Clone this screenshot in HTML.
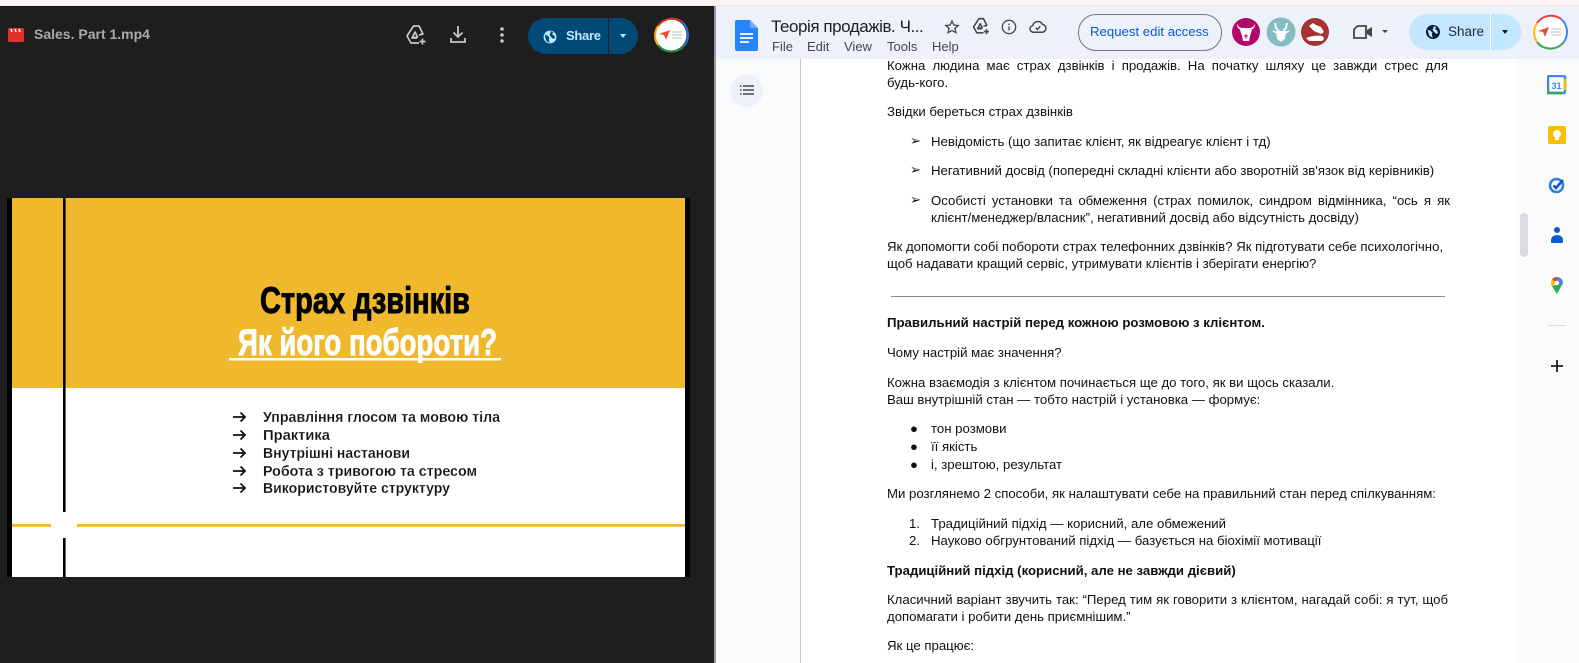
<!DOCTYPE html>
<html><head><meta charset="utf-8">
<style>
html,body{margin:0;padding:0;width:1579px;height:663px;overflow:hidden;background:#fff;font-family:"Liberation Sans",sans-serif}
.a{position:absolute}
#doc span,#doc div.l{position:absolute;white-space:nowrap;font-size:13.2px;line-height:18px;color:#111}
#doc .j{width:561px;left:887px;white-space:normal!important;text-align:justify;text-align-last:justify;height:18px}
#doc .t{left:887px}
#doc .li{left:931px}
#doc .b{font-weight:bold}
.m{position:absolute;top:38px;font-size:13px;line-height:18px;color:#444746}
</style></head><body>
<div class="a" style="left:0;top:0;width:1579px;height:5px;background:#fff5f2;border-bottom:1px solid #f0e4e0"></div>
<div class="a" style="left:0;top:6px;width:714px;height:657px;background:#1e1e1e"></div>
<div class="a" style="left:714px;top:6px;width:2px;height:657px;background:#9a9a9a"></div>

<!-- viewer header -->
<svg class="a" style="left:8px;top:28px" width="16" height="14" viewBox="0 0 16 14"><rect y="0" width="16" height="14" rx="1.5" fill="#e13027"/><path d="M3 1l1 3M7 1l1 3M11 1l1 3" stroke="#fff" stroke-width="1.6"/></svg>
<div class="a" style="left:34px;top:25px;font-size:14px;line-height:18px;font-weight:bold;color:#aaa">Sales. Part 1.mp4</div>
<svg class="a" style="left:404px;top:24px" width="24" height="24" viewBox="0 0 24 24" fill="none" stroke="#c7c7c7" stroke-width="1.700" stroke-linejoin="round"><path d="M15 11L19 10 15 2H9.500L3 12l4 7h8"/><path d="M8 14l3-6 2.500 5zM8 14h5"/><path d="M18.500 14.500v6M15.500 17.500h6"/></svg>
<svg class="a" style="left:446px;top:22px" width="24" height="24" viewBox="0 0 24 24" fill="none" stroke="#c7c7c7" stroke-width="1.800"><path d="M12 4v11M7.500 10.500L12 15l4.500-4.500M5 16v4h14v-4"/></svg>
<svg class="a" style="left:490px;top:23px" width="24" height="24" fill="#c7c7c7"><circle cx="12" cy="6" r="1.800"/><circle cx="12" cy="12" r="1.800"/><circle cx="12" cy="18" r="1.800"/></svg>
<div class="a" style="left:528px;top:18px;width:110px;height:36px;border-radius:18px;background:#004a77"></div>
<div class="a" style="left:608px;top:18px;width:1px;height:36px;background:#1e1e1e"></div>
<svg class="a" style="left:543px;top:30px" width="14" height="14" viewBox="0 0 24 24"><circle cx="12" cy="12" r="11" fill="#c2e7ff"/><path d="M3 8l5 2 3 3-1 4 2 5-6-3-2-6zM13 2l5 2-3 3 4 2 2 5-4 1-4-4-2-3 2-3z" fill="#004a77"/></svg>
<div class="a" style="left:566px;top:27px;font-size:13px;line-height:18px;font-weight:bold;color:#c2e7ff;letter-spacing:-.3px">Share</div>
<div class="a" style="left:620px;top:34px;border:3.500px solid transparent;border-top:4px solid #c2e7ff;border-bottom:0"></div>
<svg class="a" style="left:652px;top:16px" width="38" height="38" viewBox="0 0 38 38"><circle cx="19" cy="19" r="15.500" fill="#fff"/><g fill="none" stroke-width="2"><path d="M6 10A17 17 0 0 1 30 6" stroke="#d93025"/><path d="M30 6A17 17 0 0 1 32 30" stroke="#1a73e8"/><path d="M32 30A17 17 0 0 1 6 29" stroke="#1e8e3e"/><path d="M6 29A17 17 0 0 1 6 10" stroke="#f9ab00"/></g><path d="M7 18l11-4-4 10-2-5z" fill="#e8502a"/><path d="M20 16h10M20 19h10M20 22h10" stroke="#aaa" stroke-width=".7"/></svg>

<!-- slide -->
<svg class="a" style="left:0;top:190px" width="714" height="400" viewBox="0 190 714 400" font-family="Liberation Sans, sans-serif">
<rect x="7" y="198" width="683" height="379" fill="#000"/>
<rect x="12" y="198" width="673" height="379" fill="#fff"/>
<rect x="12" y="198" width="673" height="190" fill="#f0b92d"/>
<rect x="63" y="198" width="2.600" height="314" fill="#000"/>
<rect x="63" y="538" width="2.600" height="39" fill="#000"/>
<rect x="12" y="524" width="39" height="2.800" fill="#f0b92d"/>
<rect x="77" y="524" width="608" height="2.800" fill="#f0b92d"/>
<text x="260" y="313" font-size="37" font-weight="bold" fill="#000" stroke="#000" stroke-width=".9" textLength="210" lengthAdjust="spacingAndGlyphs">Страх дзвінків</text>
<text x="238" y="355" font-size="37" font-weight="bold" fill="#fff" stroke="#fff" stroke-width=".9" textLength="259" lengthAdjust="spacingAndGlyphs">Як його побороти?</text>
<rect x="229" y="358" width="272" height="2.500" fill="#fff"/>
<g font-size="14.500" fill="#111" font-weight="bold" stroke="#fff" stroke-width=".15">
<text x="263" y="422" textLength="237" lengthAdjust="spacingAndGlyphs">Управління глосом та мовою тіла</text>
<text x="263" y="440" textLength="67" lengthAdjust="spacingAndGlyphs">Практика</text>
<text x="263" y="458" textLength="147" lengthAdjust="spacingAndGlyphs">Внутрішні настанови</text>
<text x="263" y="476" textLength="214" lengthAdjust="spacingAndGlyphs">Робота з тривогою та стресом</text>
<text x="263" y="493" textLength="187" lengthAdjust="spacingAndGlyphs">Використовуйте структуру</text>
</g>
<g fill="none" stroke="#111" stroke-width="1.800">
<path d="M233 417h12M240.500 412.500l4.500 4.500-4.500 4.500"/>
<path d="M233 435h12M240.500 430.500l4.500 4.500-4.500 4.500"/>
<path d="M233 453h12M240.500 448.500l4.500 4.500-4.500 4.500"/>
<path d="M233 471h12M240.500 466.500l4.500 4.500-4.500 4.500"/>
<path d="M233 488h12M240.500 483.500l4.500 4.500-4.500 4.500"/>
</g>
</svg>

<!-- docs background -->
<div class="a" style="left:716px;top:59px;width:84px;height:604px;background:#f9fbfd;border-right:1px solid #c7c7c7"></div>
<div class="a" style="left:1517px;top:59px;width:62px;height:604px;background:#f9fbfd"></div>
<div class="a" style="left:716px;top:6px;width:863px;height:53px;background:#edf2fa"></div>

<!-- docs header -->
<svg class="a" style="left:735px;top:20px" width="23" height="31" viewBox="0 0 23 31"><path d="M2 0h13l8 8v21a2 2 0 0 1-2 2H2a2 2 0 0 1-2-2V2a2 2 0 0 1 2-2z" fill="#2684fc"/><path d="M15 0l8 8h-6a2 2 0 0 1-2-2z" fill="#a6c8ff" opacity=".6"/><path d="M5 14h13M5 18h13M5 22h9" stroke="#fff" stroke-width="1.800"/></svg>
<div class="a" style="left:771px;top:16px;font-size:17px;line-height:22px;color:#1f1f1f;white-space:nowrap;letter-spacing:-.45px">Теорія продажів. Ч...</div>
<div class="m" style="left:772px">File</div><div class="m" style="left:807px">Edit</div><div class="m" style="left:844px">View</div><div class="m" style="left:887px">Tools</div><div class="m" style="left:932px">Help</div>
<svg class="a" style="left:944px;top:19px" width="16" height="16" viewBox="0 0 24 24" fill="none" stroke="#444746" stroke-width="2"><path d="M12 3l2.800 6 6.500.7-4.900 4.400 1.400 6.400L12 17.200l-5.800 3.300 1.400-6.400-4.900-4.400 6.500-.7z"/></svg>
<svg class="a" style="left:971px;top:17px" width="20" height="20" viewBox="0 0 24 24" fill="none" stroke="#444746" stroke-width="1.900" stroke-linejoin="round"><path d="M15 11L19 10 15 2H9.500L3 12l4 7h8"/><path d="M8 14l3-6 2.500 5zM8 14h5"/><path d="M18.500 14.500v6M15.500 17.500h6"/></svg>
<svg class="a" style="left:1001px;top:19px" width="16" height="16" viewBox="0 0 24 24" fill="none" stroke="#444746" stroke-width="2"><circle cx="12" cy="12" r="10"/><path d="M12 11v6M12 7v2"/></svg>
<svg class="a" style="left:1029px;top:18px" width="18" height="18" viewBox="0 0 24 24" fill="none" stroke="#444746" stroke-width="2"><path d="M6 19a4.500 4.500 0 0 1-1-8.900A7 7 0 0 1 18 8.500a5.300 5.300 0 0 1 0 10.500z"/><path d="M9 13l2.300 2.300L15 11"/></svg>
<div class="a" style="left:1078px;top:14px;width:142px;height:35px;border:1px solid #747775;border-radius:18px"></div>
<div class="a" style="left:1090px;top:23px;font-size:13.200px;line-height:18px;color:#0b57d0;white-space:nowrap">Request edit access</div>

<svg class="a" style="left:1230px;top:16px" width="100" height="32" viewBox="0 0 100 32">
<circle cx="16" cy="16" r="14" fill="#b5076b"/><path d="M7 8c0 4 2 5 4 6h10c2-1 4-2 4-6l-2 3-3 1H12l-3-1zM10 14h12l-2 6-1 5h-6l-1-5z" fill="#fff"/><path d="M16 18v5M14 20h4" stroke="#b5076b"/>
<circle cx="51" cy="16" r="14.500" fill="#84bcc0"/><path d="M45 7l1 5 3 3M57 7l-1 5-3 3M43 15l4 2M59 15l-4 2" fill="none" stroke="#fff" stroke-width="1.800"/><path d="M46 15h10l-1 8-4 3-4-3z" fill="#fff"/>
<circle cx="85" cy="16" r="14" fill="#a83232"/><path d="M79 10l4-3 3 2 5 2 3 5-3 2-7-3zM76 22c5-2 12-3 16-2 3 1 2 5-1 5H79z" fill="#fff"/>
</svg>

<svg class="a" style="left:1353px;top:25px" width="20" height="14" viewBox="0 0 20 14" fill="none" stroke="#444746" stroke-width="1.800"><path d="M4.500 1H13v12H1V4.500z"/><path d="M14 5l5-3v10l-5-3z" fill="#444746" stroke="none"/></svg>
<div class="a" style="left:1382px;top:30px;border:3px solid transparent;border-top:3.500px solid #444746;border-bottom:0"></div>
<div class="a" style="left:1409px;top:14px;width:112px;height:36px;border-radius:18px;background:#c2e7ff"></div>
<div class="a" style="left:1490px;top:14px;width:1px;height:36px;background:#fff"></div>
<svg class="a" style="left:1426px;top:25px" width="14" height="14" viewBox="0 0 24 24"><circle cx="12" cy="12" r="12" fill="#001d35"/><path d="M3 8l5 2 3 3-1 4 2 5-6-3-2-6zM13 2l5 2-3 3 4 2 2 5-4 1-4-4-2-3 2-3z" fill="#c2e7ff"/></svg>
<div class="a" style="left:1448px;top:23px;font-size:13.500px;line-height:18px;color:#1f2a33">Share</div>
<div class="a" style="left:1502px;top:30px;border:3.500px solid transparent;border-top:4px solid #001d35;border-bottom:0"></div>
<svg class="a" style="left:1531px;top:13px" width="38" height="38" viewBox="0 0 38 38"><circle cx="19" cy="19" r="16.500" fill="#fff"/><g fill="none" stroke-width="2"><path d="M6 10A17 17 0 0 1 30 6" stroke="#ea4335"/><path d="M30 6A17 17 0 0 1 32 30" stroke="#4285f4"/><path d="M32 30A17 17 0 0 1 6 29" stroke="#34a853"/><path d="M6 29A17 17 0 0 1 6 10" stroke="#fbbc04"/></g><path d="M7 18l11-4-4 10-2-5z" fill="#e8502a"/><path d="M20 16h10M20 19h10M20 22h10" stroke="#aaa" stroke-width=".7"/></svg>

<!-- outline button -->
<div class="a" style="left:730px;top:74px;width:33px;height:33px;border-radius:50%;background:#edf2fa"></div>
<svg class="a" style="left:740px;top:84px" width="14" height="12" viewBox="0 0 14 12" stroke="#444746" stroke-width="1.500"><path d="M0 2h1.500M3 2h11M0 6h1.500M3 6h11M0 10h1.500M3 10h11"/></svg>

<!-- doc text -->
<div id="doc">
<div class="l j" style="top:57px">Кожна людина має страх дзвінків і продажів. На початку шляху це завжди стрес для</div>
<span class="t" style="top:74px">будь-кого.</span>
<span class="t" style="top:103px">Звідки береться страх дзвінків</span>
<span style="left:910px;top:133px;font-family:'DejaVu Sans'">➢</span><span class="li" style="top:133px">Невідомість (що запитає клієнт, як відреагує клієнт і тд)</span>
<span style="left:910px;top:162px;font-family:'DejaVu Sans'">➢</span><span class="li" style="top:162px">Негативний досвід (попередні складні клієнти або зворотній зв'язок від керівників)</span>
<span style="left:910px;top:192px;font-family:'DejaVu Sans'">➢</span>
<div class="l j" style="left:931px;width:519px;top:192px">Особисті установки та обмеження (страх помилок, синдром відмінника, “ось я як</div>
<span class="li" style="top:209px">клієнт/менеджер/власник”, негативний досвід або відсутність досвіду)</span>
<span class="t" style="top:238px">Як допомогти собі побороти страх телефонних дзвінків? Як підготувати себе психологічно,</span>
<span class="t" style="top:255px">щоб надавати кращий сервіс, утримувати клієнтів і зберігати енергію?</span>
<div class="a" style="left:891px;top:296px;width:554px;height:1px;background:#8a8a8a"></div>
<span class="t b" style="top:314px">Правильний настрій перед кожною розмовою з клієнтом.</span>
<span class="t" style="top:344px">Чому настрій має значення?</span>
<span class="t" style="top:374px">Кожна взаємодія з клієнтом починається ще до того, як ви щось сказали.</span>
<span class="t" style="top:391px">Ваш внутрішній стан — тобто настрій і установка — формує:</span>
<span style="left:910px;top:420px">●</span><span class="li" style="top:420px">тон розмови</span>
<span style="left:910px;top:438px">●</span><span class="li" style="top:438px">її якість</span>
<span style="left:910px;top:456px">●</span><span class="li" style="top:456px">і, зрештою, результат</span>
<span class="t" style="top:485px">Ми розглянемо 2 способи, як налаштувати себе на правильний стан перед спілкуванням:</span>
<span style="left:909px;top:515px">1.</span><span class="li" style="top:515px">Традиційний підхід — корисний, але обмежений</span>
<span style="left:909px;top:532px">2.</span><span class="li" style="top:532px">Науково обгрунтований підхід — базується на біохімії мотивації</span>
<span class="t b" style="top:562px">Традиційний підхід (корисний, але не завжди дієвий)</span>
<div class="l j" style="top:591px">Класичний варіант звучить так: “Перед тим як говорити з клієнтом, нагадай собі: я тут, щоб</div>
<span class="t" style="top:608px">допомагати і робити день приємнішим.”</span>
<span class="t" style="top:637px">Як це працює:</span>
</div>

<!-- scrollbar & side panel -->
<div class="a" style="left:1520px;top:213px;width:8px;height:44px;border-radius:4px;background:#dadce0"></div>
<svg class="a" style="left:1547px;top:75px" width="20" height="20" viewBox="0 0 20 20"><rect x="1" y="1" width="17" height="17" rx="1.500" fill="#fff" stroke="#4285f4" stroke-width="2.500"/><path d="M1 15v3h14" fill="none" stroke="#34a853" stroke-width="2.500"/><path d="M18 4v11" stroke="#fbbc04" stroke-width="2.500"/><text x="9.500" y="14" font-size="9" font-weight="bold" fill="#4285f4" text-anchor="middle">31</text></svg>
<svg class="a" style="left:1548px;top:126px" width="18" height="18" viewBox="0 0 18 18"><rect width="18" height="18" rx="2" fill="#fbbc04"/><circle cx="9" cy="8" r="4" fill="#fff"/><rect x="7" y="12" width="4" height="2" fill="#fff"/></svg>
<svg class="a" style="left:1548px;top:176px" width="18" height="18" viewBox="0 0 18 18" fill="none"><circle cx="8.500" cy="9.500" r="6.500" stroke="#2b7de9" stroke-width="2.500"/><path d="M5.500 9.500l2.500 2.500L15 4" stroke="#0b57d0" stroke-width="2.500"/></svg>
<svg class="a" style="left:1550px;top:226px" width="14" height="18" viewBox="0 0 14 18" fill="#0b57d0"><circle cx="7" cy="4" r="3"/><path d="M1 16v-2c0-3 3-5 6-5s6 2 6 5v2a1 1 0 0 1-1 1H2a1 1 0 0 1-1-1z"/></svg>
<svg class="a" style="left:1551px;top:277px" width="12" height="17" viewBox="0 0 12 17"><path d="M6 0a6 6 0 0 1 6 6L6 11z" fill="#4285f4"/><path d="M6 0a6 6 0 0 0-5 2.500L6 6z" fill="#ea4335"/><path d="M1 2.500A6 6 0 0 0 .8 9L6 6z" fill="#fbbc04"/><path d="M.8 9L6 17l6-11z" fill="#34a853"/><circle cx="6" cy="6" r="2.200" fill="#fff"/></svg>
<div class="a" style="left:1548px;top:325px;width:18px;height:1px;background:#dadce0"></div>
<svg class="a" style="left:1551px;top:360px" width="12" height="12" stroke="#1f1f1f" stroke-width="1.800"><path d="M6 0v12M0 6h12"/></svg>
</body></html>
